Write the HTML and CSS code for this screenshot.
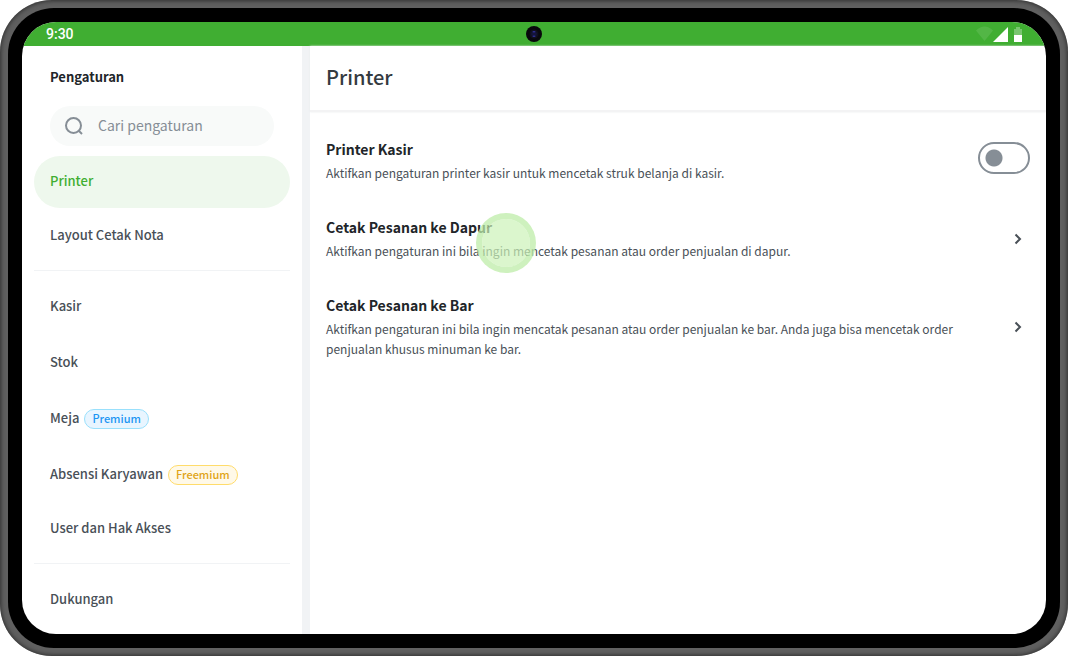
FILE: index.html
```html
<!DOCTYPE html>
<html lang="id">
<head>
<meta charset="utf-8">
<meta name="viewport" content="width=device-width, initial-scale=1">
<title>Pengaturan Printer</title>
<link rel="stylesheet" href="styles.css">
</head>
<body>
<div class="device">
  <div class="bezel">
    <div class="screen">
      <header class="status">
        <span class="clock">9:30</span>
        <svg class="camera" viewBox="0 0 16 16" aria-hidden="true">
          <circle cx="8" cy="8" r="8" fill="#08080c"/>
          <circle cx="8" cy="8" r="4.500" fill="#10101c"/>
          <circle cx="8" cy="8" r="2.800" fill="#14143a"/>
          <ellipse cx="8" cy="5.700" rx="1.500" ry=".7" fill="#30309a"/>
          <ellipse cx="8" cy="10.300" rx="1.500" ry=".7" fill="#30309a"/>
        </svg>
        <svg class="signals" viewBox="0 0 46 16" aria-hidden="true">
          <path d="M0 4.500Q8.500-3.500 17 4.500L8.500 15z" fill="#fff" fill-opacity=".1"/>
          <path d="M32 1v15H17z" fill="#fff"/>
          <path d="M38 3h2V1h4v2h2v6h-8z" fill="#fff" fill-opacity=".3"/>
          <path d="M38 9h8v7h-8z" fill="#fff"/>
        </svg>
      </header>
      <div class="body">
        <aside class="sidebar">
          <h2 class="sidebar-title">Pengaturan</h2>
          <label class="search">
            <svg class="search-icon" viewBox="0 0 20 20" aria-hidden="true">
              <circle cx="9.500" cy="9.500" r="7.500"/>
              <path d="M15 15l3 3"/>
            </svg>
            <input class="search-input" type="search" placeholder="Cari pengaturan" aria-label="Cari pengaturan">
          </label>
          <nav class="menu">
            <div class="group group-compact">
              <a class="item active" href="#">Printer</a>
              <a class="item" href="#">Layout Cetak Nota</a>
            </div>
            <div class="group">
              <a class="item tall" href="#">Kasir</a>
              <a class="item tall" href="#">Stok</a>
              <a class="item tall" href="#">Meja <span class="badge premium">Premium</span></a>
              <a class="item tall" href="#">Absensi Karyawan <span class="badge freemium">Freemium</span></a>
              <a class="item" href="#">User dan Hak Akses</a>
            </div>
            <div class="group">
              <a class="item tall" href="#">Dukungan</a>
            </div>
          </nav>
        </aside>
        <main class="main">
          <div class="main-head"><h1 class="main-title">Printer</h1></div>
          <div class="rows">
            <label class="row row-top">
              <span class="row-text">
                <span class="row-title">Printer Kasir</span>
                <span class="row-desc">Aktifkan pengaturan printer kasir untuk mencetak struk belanja di kasir.</span>
              </span>
              <input class="toggle" type="checkbox" role="switch">
            </label>
            <a class="row" href="#">
              <span class="row-text">
                <span class="row-title">Cetak Pesanan ke Dapur</span>
                <span class="row-desc">Aktifkan pengaturan ini bila ingin mencetak pesanan atau order penjualan di dapur.</span>
              </span>
              <svg class="chevron" viewBox="0 0 24 24" aria-hidden="true"><path d="M9.500 7.500L14 12l-4.500 4.500"/></svg>
              <span class="touch"></span>
            </a>
            <a class="row" href="#">
              <span class="row-text">
                <span class="row-title">Cetak Pesanan ke Bar</span>
                <span class="row-desc">Aktifkan pengaturan ini bila ingin mencatak pesanan atau order penjualan ke bar. Anda juga bisa mencetak order penjualan khusus minuman ke bar.</span>
              </span>
              <svg class="chevron" viewBox="0 0 24 24" aria-hidden="true"><path d="M9.500 7.500L14 12l-4.500 4.500"/></svg>
            </a>
          </div>
        </main>
      </div>
    </div>
  </div>
</div>
</body>
</html>
```
FILE: styles.css
```css
* { box-sizing: border-box; }
body {
  margin: 0;
  background: #fff;
  color: #212529;
  font-family: "Noto Sans CJK SC", "Open Sans", sans-serif;
}
h1, h2 { margin: 0; }
a { color: inherit; text-decoration: none; }

.device {
  display: flex;
  min-height: 100vh;
  padding: 8px;
  border-radius: 52px;
  background: #606060;
  box-shadow: inset 0 0 4px 1px #303030;
}
.bezel {
  display: flex;
  flex: 1;
  padding: 14px;
  border-radius: 46px;
  background: #000;
}
.screen {
  display: flex;
  flex: 1;
  flex-direction: column;
  overflow: hidden;
  border-radius: 34px;
  background: #fff;
}

.status {
  display: grid;
  grid-template-columns: 1fr auto 1fr;
  align-items: center;
  height: 24px;
  padding: 0 24px;
  background: #40ae32;
  color: #fff;
}
.clock { font: 500 14px/24px Roboto, sans-serif; }
.camera { width: 16px; height: 16px; }
.signals { width: 46px; height: 16px; justify-self: end; }

.body { display: flex; flex: 1; }
.sidebar {
  width: 288px;
  padding: 19px 12px 0;
  border-right: 8px solid #f1f3f5;
}
.sidebar-title { padding: 0 16px; font-size: 13px; line-height: 24px; font-weight: 700; }
.search {
  display: flex;
  align-items: center;
  gap: 14px;
  height: 40px;
  margin: 17px 16px 10px;
  padding: 0 14px;
  border-radius: 20px;
  background: #f8faf9;
}
.search-icon { flex: none; width: 20px; height: 20px; fill: none; stroke: #868e96; stroke-width: 2; }
.search-input {
  flex: 1;
  min-width: 0;
  padding: 0 0 2px;
  border: 0;
  outline: 0;
  background: transparent;
  color: #212529;
  font: 400 14px/24px "Noto Sans CJK SC", sans-serif;
}
.search-input::placeholder { color: #868e96; opacity: 1; }

.group { display: flex; flex-direction: column; }
.group-compact { gap: 2px; }
.group + .group { margin-top: 8px; padding-top: 8px; border-top: 1px solid #f1f3f5; }
.item {
  display: flex;
  align-items: center;
  gap: 5px;
  min-height: 52px;
  padding: 0 16px 2px;
  border-radius: 26px;
  color: #495057;
  font-size: 13px;
  line-height: 20px;
  font-weight: 500;
}
.tall { min-height: 56px; }
.active { background: #eef8ed; color: #40ae32; }
.badge {
  margin-top: 2px;
  padding: 0 7px 2px;
  border: 1px solid;
  border-radius: 10px;
  font-size: 11px;
  line-height: 16px;
}
.premium { border-color: #99e0fc; background: #e8f5ff; color: #1c95f3; }
.freemium { border-color: #ffdc6b; background: #fff9e8; color: #dfa416; }

.main { flex: 1; min-width: 0; }
.main-head {
  padding: 15px 16px 17px;
  border-bottom: 2px solid #f3f3f4;
  box-shadow: 0 0 2px #e9ebed;
}
.main-title { color: #343a40; font-size: 20px; line-height: 32px; font-weight: 500; }
.rows { padding-top: 10px; }
.row {
  position: relative;
  display: flex;
  align-items: center;
  gap: 24px;
  padding: 15px 16px;
}
.row-top { align-items: flex-start; }
.row-text { display: flex; flex: 1; flex-direction: column; gap: 2px; padding-bottom: 2px; }
.row-title { font-size: 14px; line-height: 24px; font-weight: 700; }
.row-desc { color: #495057; font-size: 12px; line-height: 20px; }
.chevron { flex: none; width: 24px; height: 24px; fill: none; stroke: #495057; stroke-width: 2; }
.toggle {
  appearance: none;
  flex: none;
  width: 52px;
  height: 32px;
  margin: 5px 0 0;
  border: 2px solid #868e96;
  border-radius: 16px;
  background: radial-gradient(circle at 14px 14px, #868e96 8px, transparent 9px) #fff;
}
.touch {
  position: absolute;
  top: 13px;
  left: 166px;
  width: 60px;
  height: 60px;
  border: 6px solid rgba(190, 236, 168, .75);
  border-radius: 50%;
  background: rgba(204, 242, 184, .7);
  background-clip: padding-box;
}
```
